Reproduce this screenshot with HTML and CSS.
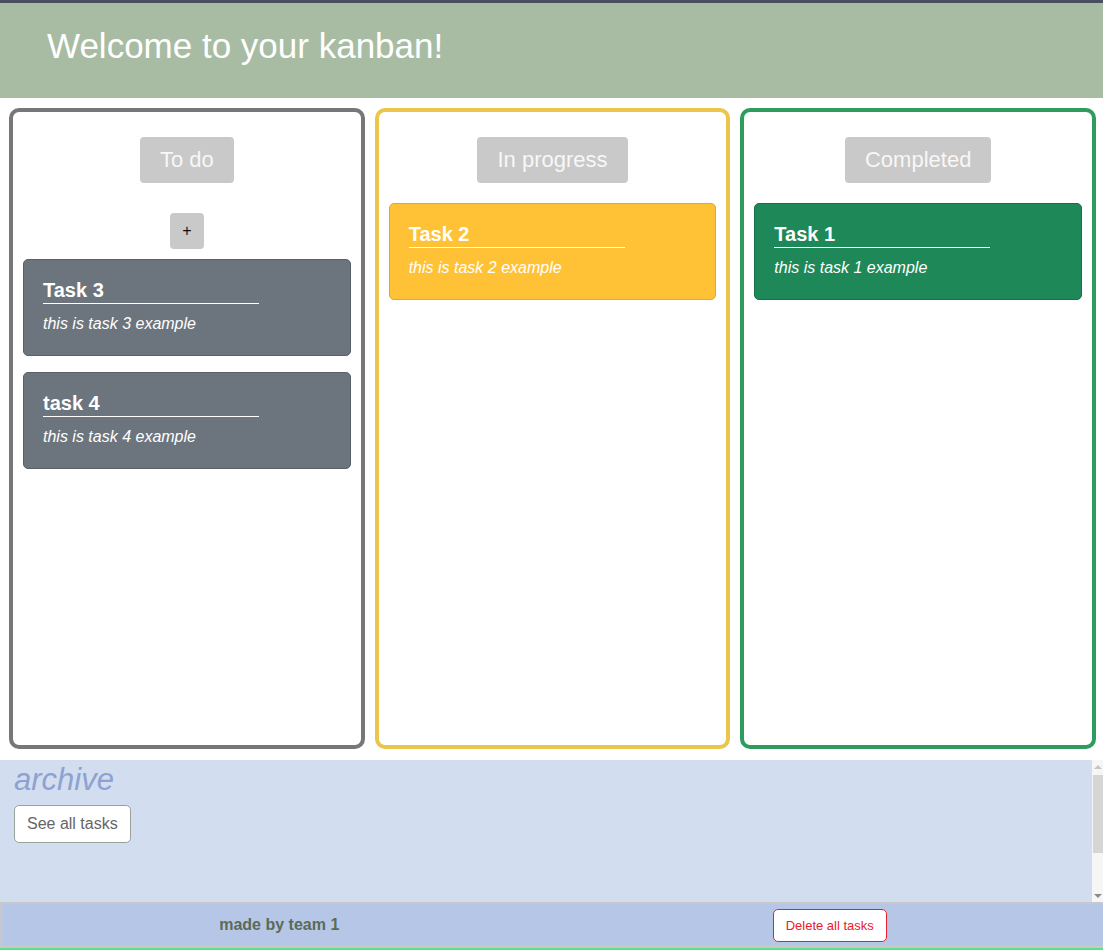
FILE: index.html
```html
<!DOCTYPE html>
<html lang="en">
<head>
<meta charset="utf-8">
<title>Kanban</title>
<link rel="stylesheet" href="styles.css">
</head>
<body>
<div class="topline"></div>
<header class="header">
  <h1 class="title">Welcome to your kanban!</h1>
</header>
<main class="board">
  <section class="column column-todo">
    <div class="column-head"><span class="column-label">To do</span></div>
    <div class="add-row"><button class="add-btn">+</button></div>
    <div class="card card-gray">
      <h3 class="card-title">Task 3</h3>
      <p class="card-desc">this is task 3 example</p>
    </div>
    <div class="card card-gray">
      <h3 class="card-title">task 4</h3>
      <p class="card-desc">this is task 4 example</p>
    </div>
  </section>
  <section class="column column-progress">
    <div class="column-head"><span class="column-label">In progress</span></div>
    <div class="card card-yellow">
      <h3 class="card-title">Task 2</h3>
      <p class="card-desc">this is task 2 example</p>
    </div>
  </section>
  <section class="column column-done">
    <div class="column-head"><span class="column-label">Completed</span></div>
    <div class="card card-green">
      <h3 class="card-title">Task 1</h3>
      <p class="card-desc">this is task 1 example</p>
    </div>
  </section>
</main>
<section class="archive">
  <div class="archive-content">
    <h2 class="archive-title">archive</h2>
    <button class="see-btn">See all tasks</button>
  </div>
  <div class="scrollbar">
    <div class="scroll-arrow scroll-up"></div>
    <div class="scroll-track"><div class="scroll-thumb"></div></div>
    <div class="scroll-arrow scroll-down"></div>
  </div>
</section>
<footer class="footer">
  <div class="footer-half"><span class="credit">made by team 1</span></div>
  <div class="footer-half"><button class="delete-btn">Delete all tasks</button></div>
</footer>
<div class="bottomline"></div>
</body>
</html>
```

FILE: styles.css
```css
* { box-sizing: border-box; }

html, body {
  margin: 0;
  padding: 0;
}

body {
  font-family: "Liberation Sans", Arial, sans-serif;
  background: #ffffff;
  overflow: hidden;
}

.topline {
  height: 3px;
  background: #4a4e62;
}

.header {
  height: 95px;
  background: #a8bca3;
  padding: 22px 0 0 47px;
}

.title {
  margin: 0;
  font-size: 35px;
  font-weight: normal;
  line-height: 42px;
  color: #ffffff;
}

.board {
  display: flex;
  gap: 10px;
  padding: 10px 7px 0 9px;
}

.column {
  flex: 1 1 0;
  min-width: 0;
  height: 641px;
  border: 4px solid #777777;
  border-radius: 10px;
  padding: 25px 10px 10px;
  display: flex;
  flex-direction: column;
}

.column-todo { border-color: #777777; }
.column-progress { border-color: #ecc54b; }
.column-done { border-color: #2e9c5d; }

.column-head {
  display: flex;
  justify-content: center;
  margin-bottom: 20px;
}

.column-label {
  background: #c9c9c9;
  color: #f7f7f7;
  font-size: 22px;
  line-height: 26px;
  padding: 10px 20px;
  border-radius: 4px;
}

.add-row {
  display: flex;
  justify-content: center;
  margin: 10px 0 10px;
}

.add-btn {
  width: 34px;
  height: 36px;
  border: none;
  border-radius: 4px;
  background: #c9c9c9;
  color: #111111;
  font-family: "Liberation Sans", Arial, sans-serif;
  font-size: 16px;
  padding: 0;
}

.card {
  height: 97px;
  flex: 0 0 97px;
  border: 1px solid #5c636a;
  border-radius: 5px;
  padding: 19px 19px 0;
  margin-bottom: 16px;
  color: #ffffff;
}

.card-gray { background: #6c757d; border-color: #596067; }
.card-yellow { background: #ffc236; border-color: #e3a72c; }
.card-green { background: #1e8858; border-color: #1a6e48; }

.card-title {
  margin: 0;
  width: 216px;
  font-size: 20px;
  font-weight: bold;
  line-height: 22px;
  padding-bottom: 2px;
  border-bottom: 1.5px solid #ffffff;
}

.card-desc {
  margin: 11px 0 0;
  font-size: 16px;
  font-style: italic;
  line-height: 18px;
}

.archive {
  margin-top: 11px;
  height: 142px;
  background: #d2ddf0;
  display: flex;
}

.archive-content {
  flex: 1;
  padding: 3px 0 0 14px;
}

.archive-title {
  margin: 0;
  font-size: 31px;
  font-style: italic;
  font-weight: normal;
  line-height: 34px;
  color: #8ea2d2;
}

.see-btn {
  margin-top: 8px;
  display: block;
  background: #ffffff;
  border: 1px solid #9aa39a;
  border-radius: 5px;
  color: #666666;
  font-family: "Liberation Sans", Arial, sans-serif;
  font-size: 16px;
  line-height: 18px;
  padding: 9px 12px;
}

.scrollbar {
  width: 11px;
  background: #f6f6f6;
  display: flex;
  flex-direction: column;
}

.scroll-arrow {
  height: 13px;
  display: flex;
  justify-content: center;
  align-items: center;
}

.scroll-up::before {
  content: "";
  border-left: 4px solid transparent;
  border-right: 4px solid transparent;
  border-bottom: 4px solid #c6c6c6;
}

.scroll-down::before {
  content: "";
  border-left: 4px solid transparent;
  border-right: 4px solid transparent;
  border-top: 4px solid #8c8c8c;
}

.scroll-track {
  flex: 1;
  padding: 2px 0 0 1px;
}

.scroll-thumb {
  height: 78px;
  background: #d6d6d6;
}

.footer {
  height: 46px;
  background: #b5c6e7;
  border-top: 2px solid #c8c8c8;
  border-left: 2px solid #c8c8c8;
  border-bottom: 2px solid #c8c8c8;
  display: flex;
  align-items: center;
}

.footer-half {
  flex: 1;
  display: flex;
  justify-content: center;
}

.credit {
  font-size: 16px;
  font-weight: bold;
  color: #5b6b56;
  margin-left: 4px;
}

.delete-btn {
  margin-left: 4px;
  background: #ffffff;
  border: 1px solid #e8202e;
  border-radius: 5px;
  color: #e8202e;
  font-family: "Liberation Sans", Arial, sans-serif;
  font-size: 13px;
  line-height: 15px;
  padding: 8px 12px;
}

.bottomline {
  height: 2px;
  background: #5fdf8b;
}
```
